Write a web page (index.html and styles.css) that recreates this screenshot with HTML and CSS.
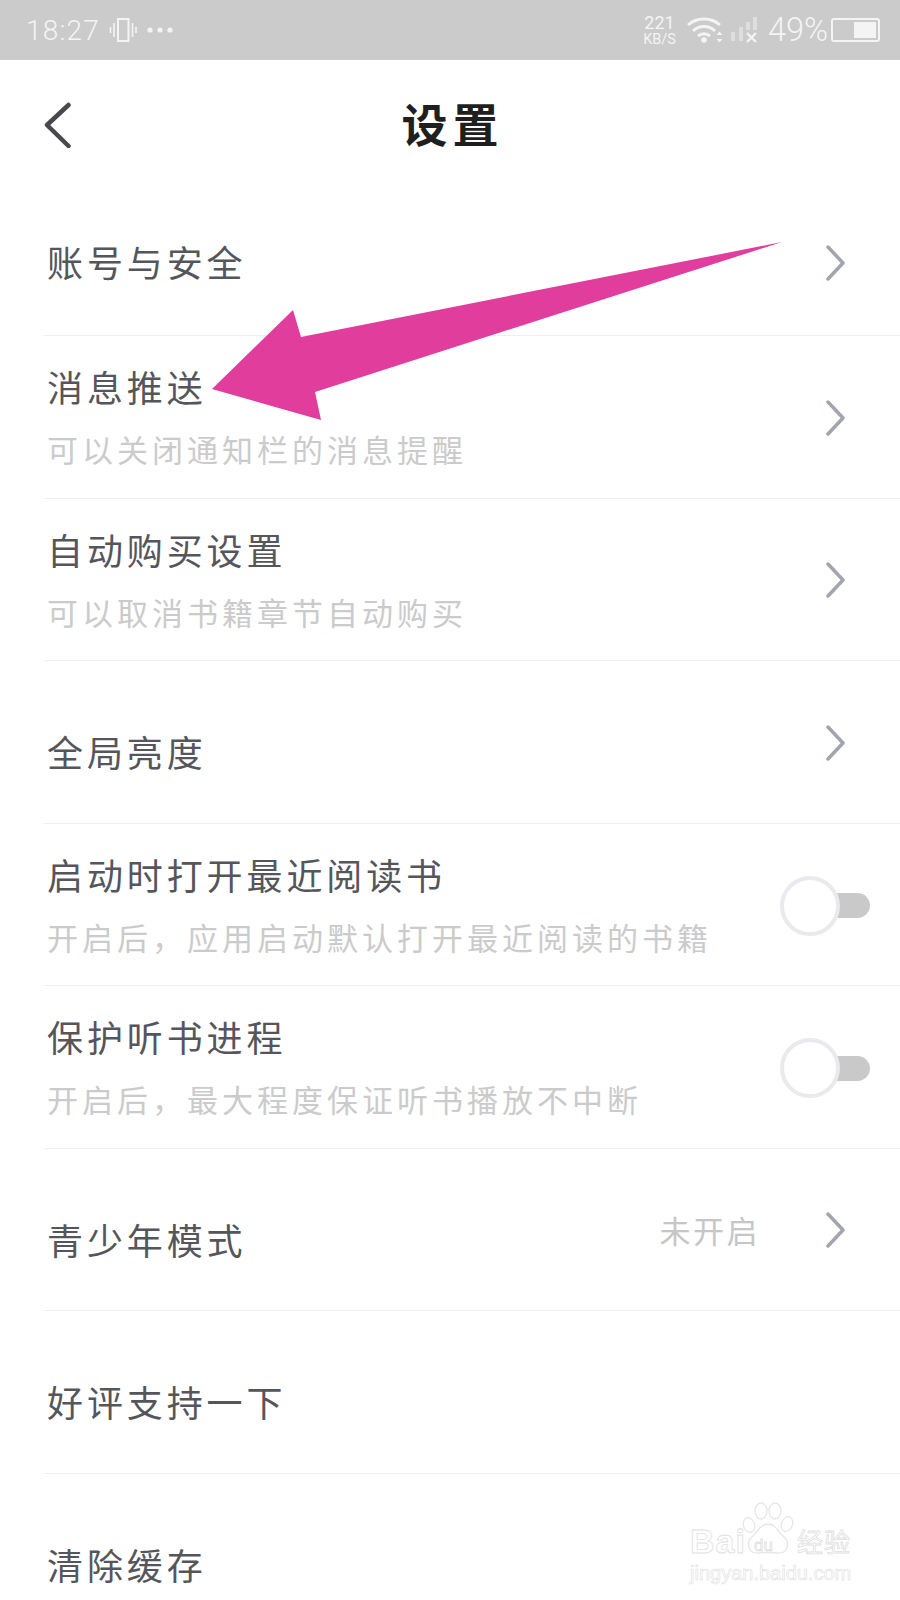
FILE: index.html
```html
<!DOCTYPE html>
<html lang="zh">
<head>
    <meta http-equiv="content-type" content="text/html; charset=UTF-8">
    <meta name="viewport" content="width=device-width, initial-scale=1.0">
    <title>设置</title>
    <link rel="stylesheet" href="styles.css">
</head>

<body>
<div id="screen">
    <div class="statusbar">
        <div class="status-left">
            <span class="time">18:27</span>
            <svg class="ic-vibrate" width="28" height="26" viewBox="0 0 28 26" fill="none" stroke="#f4f4f4">
                <rect x="9" y="2" width="10.5" height="22" stroke-width="2"></rect>
                <path d="M5 6v14M1.500 10v6M23.500 6v14M27 10v6" stroke-width="1.600"></path>
            </svg>
            <svg class="ic-dots" width="26" height="6" viewBox="0 0 26 6" fill="#f4f4f4">
                <circle cx="3" cy="3" r="2.600"></circle>
                <circle cx="13" cy="3" r="2.600"></circle>
                <circle cx="23" cy="3" r="2.600"></circle>
            </svg>
        </div>
        <div class="status-right">
            <div class="speed"><span class="speed-num">221</span><span class="speed-unit">KB/S</span></div>
            <svg class="ic-wifi" width="36" height="28" viewBox="0 0 36 28" fill="none" stroke="#f4f4f4" stroke-width="3">
                <path d="M1 9C10 1 24 1 33 9"></path>
                <path d="M6 15C12 9 22 9 28 15"></path>
                <path d="M11 20C14.500 17 19.500 17 23 20"></path>
                <circle cx="17" cy="24" r="2.800" fill="#f4f4f4" stroke="none"></circle>
                <path d="M29.500 19l3 -3.500l3 3.500zM29.500 23l3 3.500l3 -3.500z" fill="#f4f4f4" stroke="none"></path>
            </svg>
            <svg class="ic-signal" width="28" height="26" viewBox="0 0 28 26">
                <rect x="0" y="15" width="4" height="9" fill="#dedede"></rect>
                <rect x="8" y="10" width="4" height="14" fill="#dedede"></rect>
                <rect x="15" y="5" width="4" height="8" fill="#dedede"></rect>
                <rect x="22" y="0" width="4" height="13" fill="#dedede"></rect>
                <path d="M16 16l9 9M25 16l-9 9" stroke="#f4f4f4" stroke-width="2.400"></path>
            </svg>
            <span class="battery-pct">49%</span>
            <div class="battery"><div class="battery-level"></div></div>
        </div>
    </div>

    <div class="navbar">
        <svg class="ic-back" width="28" height="46" viewBox="0 0 28 46" fill="none" stroke="#48494d" stroke-width="4.500" stroke-linecap="round" stroke-linejoin="round">
            <path d="M24.500 3L3 23L24.500 44"></path>
        </svg>
        <h1 class="nav-title">设置</h1>
    </div>

    <div class="list">
        <div class="row row-single row-first">
            <div class="row-text"><div class="row-title">账号与安全</div></div>
            <svg class="chevron chevron-low" width="20" height="36" viewBox="0 0 20 36"><path d="M2 2L17 18L2 34"></path></svg>
        </div>
        <div class="row">
            <div class="row-text">
                <div class="row-title">消息推送</div>
                <div class="row-sub">可以关闭通知栏的消息提醒</div>
            </div>
            <svg class="chevron" width="20" height="36" viewBox="0 0 20 36"><path d="M2 2L17 18L2 34"></path></svg>
        </div>
        <div class="row">
            <div class="row-text">
                <div class="row-title">自动购买设置</div>
                <div class="row-sub">可以取消书籍章节自动购买</div>
            </div>
            <svg class="chevron" width="20" height="36" viewBox="0 0 20 36"><path d="M2 2L17 18L2 34"></path></svg>
        </div>
        <div class="row row-single">
            <div class="row-text"><div class="row-title">全局亮度</div></div>
            <svg class="chevron" width="20" height="36" viewBox="0 0 20 36"><path d="M2 2L17 18L2 34"></path></svg>
        </div>
        <div class="row">
            <div class="row-text">
                <div class="row-title">启动时打开最近阅读书</div>
                <div class="row-sub">开启后，应用启动默认打开最近阅读的书籍</div>
            </div>
            <div class="toggle"><div class="toggle-knob"></div></div>
        </div>
        <div class="row">
            <div class="row-text">
                <div class="row-title">保护听书进程</div>
                <div class="row-sub">开启后，最大程度保证听书播放不中断</div>
            </div>
            <div class="toggle"><div class="toggle-knob"></div></div>
        </div>
        <div class="row row-single">
            <div class="row-text"><div class="row-title">青少年模式</div></div>
            <span class="row-value">未开启</span>
            <svg class="chevron" width="20" height="36" viewBox="0 0 20 36"><path d="M2 2L17 18L2 34"></path></svg>
        </div>
        <div class="row row-single">
            <div class="row-text"><div class="row-title">好评支持一下</div></div>
        </div>
        <div class="row row-single row-last">
            <div class="row-text"><div class="row-title">清除缓存</div></div>
        </div>
    </div>

    <!-- annotation drawn over the screenshot -->
    <svg class="arrow" width="900" height="500" viewBox="0 0 900 500">
        <polygon points="782,242 301,337 293,310 212,389 321,420 315,392" fill="#e03d9c"></polygon>
    </svg>

    <div class="watermark">
        <svg class="paw" width="52" height="54" viewBox="0 0 52 54" fill="#fff" stroke="#e6e6e6" stroke-width="1.300">
            <ellipse cx="7" cy="23" rx="5.500" ry="7.500" transform="rotate(-20 7 23)"></ellipse>
            <ellipse cx="19" cy="9" rx="6" ry="8"></ellipse>
            <ellipse cx="33" cy="9" rx="6" ry="8"></ellipse>
            <ellipse cx="45" cy="22" rx="5.500" ry="7.500" transform="rotate(20 45 22)"></ellipse>
            <path d="M26 22C18 22 16 30 10 35C3 41 7 52 16 51C21 50.500 31 50.500 36 51C45 52 49 41 42 35C36 30 34 22 26 22Z"></path>
        </svg>
        <div class="wm-top">
            <span class="wm-bai">Bai</span><span class="wm-du">du</span><span class="wm-cn">经验</span>
        </div>
        <div class="wm-url">jingyan.baidu.com</div>
    </div>
</div>
</body>

</html>
```

FILE: styles.css
```css
html, body {
    margin: 0;
    padding: 0;
    background: #fff;
}

body {
    font-family: "Noto Sans CJK SC", "Noto Sans", sans-serif;
}

#screen {
    position: relative;
    width: 900px;
    height: 1600px;
    overflow: hidden;
    background: #fff;
}

/* status bar */
.statusbar {
    height: 60px;
    background: #cbcbcb;
    display: flex;
    justify-content: space-between;
    align-items: center;
    color: #f4f4f4;
    padding: 0 20px 0 26px;
    box-sizing: border-box;
}

.status-left, .status-right {
    display: flex;
    align-items: center;
}

.time {
    font-family: Roboto, sans-serif;
    font-weight: 300;
    font-size: 28px;
    letter-spacing: 1.200px;
    margin-right: 9px;
}

.ic-vibrate {
    margin-right: 10px;
}

.speed {
    display: flex;
    flex-direction: column;
    align-items: center;
    gap: 2px;
    font-family: Roboto, sans-serif;
    margin-right: 11px;
}

.speed-num {
    font-size: 18px;
    line-height: 17px;
}

.speed-unit {
    font-size: 14.500px;
    line-height: 14px;
}

.ic-wifi {
    margin-right: 8px;
}

.ic-signal {
    margin-right: 9px;
}

.battery-pct {
    font-family: Roboto, sans-serif;
    font-weight: 300;
    font-size: 32.500px;
    margin-right: 3px;
}

.battery {
    width: 41px;
    height: 16px;
    border: 2.500px solid #f4f4f4;
    border-radius: 3px;
    display: flex;
    justify-content: flex-end;
    padding: 2px;
    box-sizing: content-box;
}

.battery-level {
    width: 22px;
    background: #f4f4f4;
}

/* nav */
.navbar {
    height: 113.500px;
    position: relative;
    display: flex;
    align-items: center;
    justify-content: center;
    padding: 10px 0 0 5px;
    box-sizing: border-box;
}

.ic-back {
    position: absolute;
    left: 44px;
    top: 42px;
}

.nav-title {
    margin: 0;
    font-size: 46px;
    line-height: 56px;
    font-weight: 700;
    letter-spacing: 5px;
    color: #1f1f1f;
}

/* rows */
.list {
    margin-left: 44px;
}

.row {
    height: 162.500px;
    box-sizing: border-box;
    border-bottom: 1px solid #efefef;
    display: flex;
    align-items: center;
    padding: 0 54px 0 3px;
}

.row-text {
    flex: 1;
    padding-top: 2px;
}

.row-single .row-text {
    padding-top: 19px;
}

.row-first .row-text {
    padding-top: 13px;
}

.row-last {
    border-bottom: 0;
}

.row-title {
    font-size: 36px;
    line-height: 40px;
    letter-spacing: 3.900px;
    color: #55565b;
}

.row-sub {
    margin-top: 23px;
    font-size: 31px;
    line-height: 40px;
    letter-spacing: 4px;
    color: #cbcbcb;
}

.row-value {
    font-size: 31px;
    line-height: 40px;
    letter-spacing: 2.500px;
    color: #c6c6c6;
    margin-right: 66px;
    margin-top: 2px;
}

.chevron {
    fill: none;
    stroke: #a2a5ad;
    stroke-width: 3.500;
    stroke-linecap: round;
    stroke-linejoin: round;
    margin-top: 2px;
}

.chevron-low {
    margin-top: 17px;
}

.toggle {
    width: 90px;
    height: 60px;
    position: relative;
    margin-right: -24px;
    margin-top: 3px;
}

.toggle::before {
    content: "";
    position: absolute;
    left: 30px;
    right: 0;
    top: 17.500px;
    height: 25px;
    border-radius: 0 13px 13px 0;
    background: #c9c9c9;
}

.toggle-knob {
    position: absolute;
    left: 0;
    top: 0;
    width: 60px;
    height: 60px;
    box-sizing: border-box;
    border: 4px solid #e9eaee;
    border-radius: 50%;
    background: #fff;
}

/* overlays */
.arrow {
    position: absolute;
    left: 0;
    top: 0;
}

.watermark {
    position: absolute;
    left: 688px;
    top: 1502px;
    width: 170px;
    height: 82px;
}

.paw {
    position: absolute;
    left: 54px;
    top: 0;
}

.wm-top {
    position: absolute;
    left: 2px;
    top: 22px;
    width: 168px;
    line-height: 34px;
    white-space: nowrap;
}

.wm-bai, .wm-du, .wm-cn {
    color: #fff;
    -webkit-text-stroke: 0.800px #e0e0e0;
}

.wm-bai {
    font-family: "Liberation Sans", sans-serif;
    font-weight: 700;
    font-size: 34px;
    letter-spacing: 1px;
}

.wm-du {
    position: absolute;
    left: 64px;
    top: 5px;
    font-family: "Liberation Sans", sans-serif;
    font-size: 17px;
}

.wm-cn {
    position: absolute;
    left: 107px;
    top: 0;
    font-size: 26px;
    letter-spacing: 1px;
}

.wm-url {
    position: absolute;
    left: 2px;
    top: 60px;
    font-family: "Liberation Sans", sans-serif;
    font-size: 20px;
    line-height: 22px;
    white-space: nowrap;
    color: #fff;
    -webkit-text-stroke: 0.600px #e0e0e0;
}
```
